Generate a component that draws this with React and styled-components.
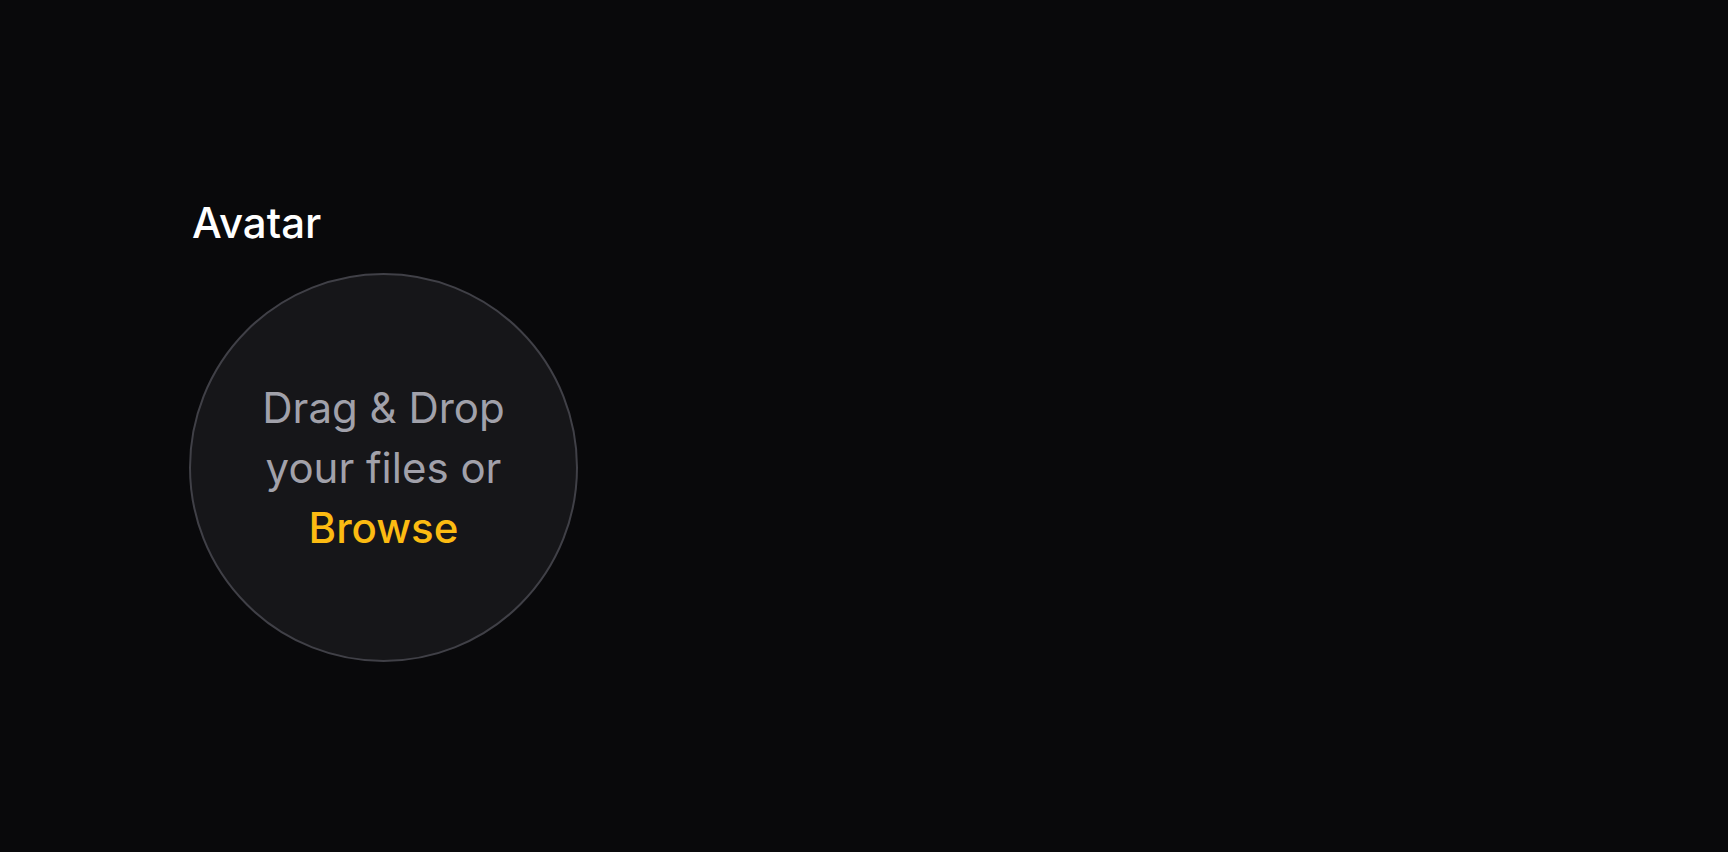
import React from 'react';
import styled, { createGlobalStyle } from 'styled-components';

const GlobalStyle = createGlobalStyle`
  html, body {
    margin: 0;
    padding: 0;
    background: #09090b;
    font-family: Inter, "Noto Sans", "Liberation Sans", sans-serif;
  }
`;

const Page = styled.main`
  min-height: 852px;
  padding: 193px 0 0 189px;
  box-sizing: border-box;
`;

const Field = styled.div`
  display: flex;
  flex-direction: column;
  align-items: flex-start;
  gap: 20px;
`;

const Label = styled.label`
  margin-left: 3px;
  font-size: 42px;
  line-height: 60px;
  font-weight: 500;
  color: #ffffff;
`;

const DropZone = styled.div`
  width: 389px;
  height: 389px;
  box-sizing: border-box;
  border-radius: 50%;
  border: 2px solid #404047;
  background: #161619;
  display: flex;
  align-items: center;
  justify-content: center;
  padding: 0 44px;
  cursor: pointer;
`;

const Prompt = styled.p`
  margin: 0;
  text-align: center;
  font-size: 42px;
  line-height: 60px;
  color: #a1a1aa;
`;

const Browse = styled.span`
  color: #fcbb12;
  font-weight: 500;
`;

const App = () => {
  return (
    <>
      <GlobalStyle />
      <Page>
        <Field>
          <Label>Avatar</Label>
          <DropZone>
            <Prompt>
              Drag &amp; Drop your files or <Browse>Browse</Browse>
            </Prompt>
          </DropZone>
        </Field>
      </Page>
    </>
  );
};

export default App;
